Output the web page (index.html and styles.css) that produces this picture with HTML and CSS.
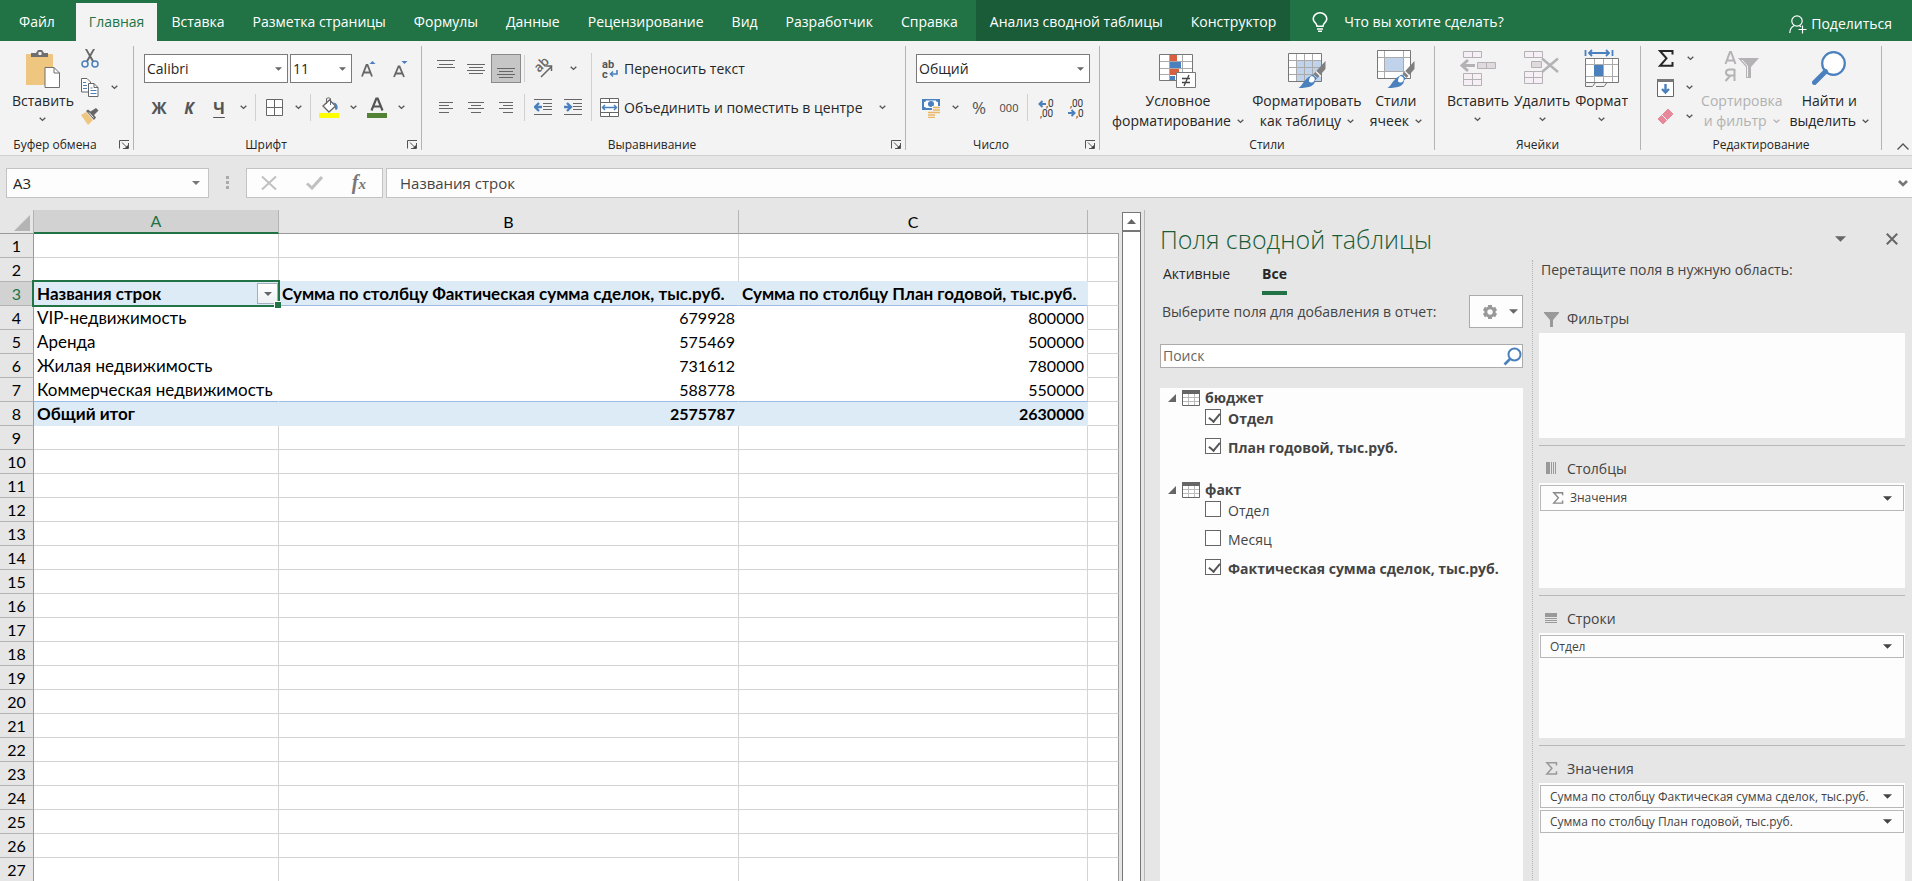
FILE: index.html
```html
<!DOCTYPE html>
<html lang="ru">
<head>
<meta charset="utf-8">
<title>Сводная таблица</title>
<link rel="stylesheet" href="styles.css">
</head>
<body>
<svg class="sprite" aria-hidden="true">
  <symbol id="chev" viewBox="0 0 7 5"><path d="M.7.8 3.5 3.4 6.3.8" fill="none" stroke="currentColor" stroke-width="1.4"/></symbol>
  <symbol id="tri" viewBox="0 0 10 5"><path d="M0 0h10L5 5z" fill="currentColor"/></symbol>
  <symbol id="launch" viewBox="0 0 10 9"><path d="M.5 8.500V.5H10M9.500 3v5.500H4M3 2.500l5.500 5.500" fill="none" stroke="#555"/><path d="M9 5v3.500H5.500z" fill="#444"/></symbol>
  <symbol id="sigma" viewBox="0 0 15 17"><path d="M14 4.500V1H1.500l6.500 7.300L1.500 15.800H14V12" fill="none" stroke="currentColor" stroke-width="2"/></symbol>
  <symbol id="brush" viewBox="0 0 28 28"><path d="M27.500 0v8l-8 9-4-4z" fill="#7f7f7f"/><path d="M18 10.500l5 5" stroke="#f3f3f3" stroke-width="1.500"/><path d="M15 13.500l4 4-2 2c0 5-5 7.500-16.500 7.500 4-3 4-5 7-8 2-2.500 4-4 7.500-5.500z" fill="#4a80bd"/><path d="M12.500 15.500c2.500-1 5 1.500 4 4-1.500 2.500-4 2.500-5.500 1 0-2 .5-3.500 1.500-5z" fill="#fff"/></symbol>
  <symbol id="grid" viewBox="0 0 18 16"><path d="M.5.5h17v15H.5z" fill="#fff" stroke="#666"/><path d="M0 0h18v4H0z" fill="#666"/><path d="M6.500 4v11M12.500 4v11M1 7.500h16M1 11.500h16" stroke="#bbb"/></symbol>
  <symbol id="find" viewBox="0 0 34 34"><circle cx="21.500" cy="12.500" r="11.300" fill="#fff" stroke="#4a80bd" stroke-width="2.200"/><path d="M13.500 20.500 2.500 31.500" stroke="#4a80bd" stroke-width="5" stroke-linecap="round"/></symbol>
</svg>

<nav class="tabs">
  <a class="tab tab-file" href="#">Файл</a>
  <a class="tab active" href="#">Главная</a>
  <a class="tab" href="#">Вставка</a>
  <a class="tab" href="#">Разметка страницы</a>
  <a class="tab" href="#">Формулы</a>
  <a class="tab" href="#">Данные</a>
  <a class="tab" href="#">Рецензирование</a>
  <a class="tab" href="#">Вид</a>
  <a class="tab" href="#">Разработчик</a>
  <a class="tab" href="#">Справка</a>
  <div class="context-tabs">
    <a class="tab" href="#">Анализ сводной таблицы</a>
    <a class="tab" href="#">Конструктор</a>
  </div>
  <button class="tell">
    <svg width="16" height="20" viewBox="0 0 16 20" fill="none" stroke="#fff" stroke-width="1.600"><path d="M5 14.200C5 11 1.200 10.500 1.200 6.800a6.800 6 0 0 1 13.600 0C14.800 10.500 11 11 11 14.200zM5 17h6M6 19.200h4"/></svg>
    <span>Что вы хотите сделать?</span>
  </button>
  <button class="share">
    <svg width="18" height="19" viewBox="0 0 18 19" fill="none" stroke="#fff" stroke-width="1.200"><circle cx="8" cy="6" r="5.200"/><path d="M.8 18c0-4 1.500-6 4.500-7.500M10.500 10.700l1.500 1M13.500 10.500v8M9.500 14.500h8"/></svg>
    <span>Поделиться</span>
  </button>
</nav>

<section class="ribbon" aria-label="Главная">
  <div class="group">
    <div class="body">
      <button class="big big-paste">
        <svg width="36" height="40" viewBox="0 0 36 40"><path d="M1 5h27v31H1z" fill="#eec680" /><path d="M6 8V4h5l2-3h4l2 3h4v4z" fill="#6f6f6f"/><path d="M13.500 3h3v3h-3z" fill="#f3f3f3"/><path d="M20 18.500h9l5.500 5.500v14.500H20z" fill="#fff" stroke="#6f6f6f"/><path d="M29 18.500V24h5.500" fill="none" stroke="#6f6f6f"/></svg>
        <span>Вставить</span><svg class="chev"><use href="#chev"/></svg>
      </button>
      <div class="stack">
        <button class="mini" aria-label="Вырезать"><svg width="18" height="19" viewBox="0 0 18 19"><path d="M4 0h2l7 12-1.500 1.500zM12 0h2L6.500 13.500 5 12z" fill="#666"/><circle cx="4" cy="15" r="3" fill="none" stroke="#4a80bd" stroke-width="1.500"/><circle cx="14" cy="15" r="3" fill="none" stroke="#4a80bd" stroke-width="1.500"/></svg></button>
        <button class="mini" aria-label="Копировать"><svg width="18" height="19" viewBox="0 0 18 19"><path d="M.5.5H6l3.500 3.500v10H.5z" fill="#fff" stroke="#666"/><path d="M2 4.500h3M2 7.500h4M2 10.500h4" stroke="#4a80bd"/><path d="M7.500 5.500H13l4 4v9H7.500z" fill="#fff" stroke="#666"/><path d="M13 5.500v4h4" fill="none" stroke="#666"/><path d="M9.500 10h2M9.500 12.500h6M9.500 15.500h6" stroke="#4a80bd"/></svg><svg class="chev"><use href="#chev"/></svg></button>
        <button class="mini" aria-label="Формат по образцу"><svg width="18" height="18" viewBox="0 0 18 18"><path d="M0 7l5-3 7 8-5 5z" fill="#eec680"/><path d="M5 3l2-1.500 2.500 2L15 0l2.500 2.500L13 7l2 2.500-2 2.500z" fill="#666"/><path d="M8 4.500l4.500 5" stroke="#f3f3f3"/></svg></button>
      </div>
    </div>
    <div class="foot"><span>Буфер обмена</span><button class="launcher" aria-label="Буфер обмена: параметры"><svg><use href="#launch"/></svg></button></div>
  </div>

  <div class="group">
    <div class="body rows">
      <div class="row row-gap">
        <div class="combo combo-font"><select aria-label="Шрифт"><option>Calibri</option></select><svg class="caret"><use href="#tri"/></svg></div>
        <div class="combo combo-size"><select aria-label="Размер шрифта"><option>11</option></select><svg class="caret"><use href="#tri"/></svg></div>
        <button class="tool" aria-label="Увеличить размер"><svg width="16" height="18" viewBox="0 0 16 18"><path d="M1 16.500 5.500 5h1L11 16.500M2.800 12.500h6.500" fill="none" stroke="#666" stroke-width="1.800"/><path d="M8.500 4h6l-3-3z" fill="#4a80bd"/></svg></button>
        <button class="tool" aria-label="Уменьшить размер"><svg width="16" height="18" viewBox="0 0 16 18"><path d="M1 17 5.500 6.500h1L11 17M2.800 13.500h6.500" fill="none" stroke="#666" stroke-width="1.800"/><path d="M8.500 1h6l-3 3z" fill="#4a80bd"/></svg></button>
      </div>
      <div class="row">
        <button class="tool letter">Ж</button><button class="tool letter italic">К</button><button class="tool letter underline">Ч</button>
        <button class="drop" aria-label="Подчеркивание"><svg class="chev"><use href="#chev"/></svg></button><i class="sep"></i>
        <button class="tool" aria-label="Границы"><svg width="17" height="17" viewBox="0 0 17 17"><path d="M.5.5h16v16H.5zM8.500 0v17M0 8.500h17" fill="#fff" stroke="#666"/></svg></button>
        <button class="drop" aria-label="Вид границы"><svg class="chev"><use href="#chev"/></svg></button><i class="sep"></i>
        <button class="tool" aria-label="Цвет заливки"><svg width="20" height="21" viewBox="0 0 20 21"><path d="M4 9l6.500-6 6 6-6.500 6z" fill="#fff" stroke="#666" stroke-width="1.300"/><path d="M7.500 7V1.500q2-1.500 4 0V8" fill="none" stroke="#666"/><path d="M14 5.500c3.500 0 5 3 4.500 6 0 1.500-2.500 2-2.500 0 0-2.500.5-4-2-6z" fill="#4a80bd"/><path d="M0 16h20v5H0z" fill="#ff0"/></svg></button>
        <button class="drop" aria-label="Выбор заливки"><svg class="chev"><use href="#chev"/></svg></button>
        <button class="tool" aria-label="Цвет шрифта"><svg width="20" height="21" viewBox="0 0 20 21"><path d="M4.500 13.500 9.300 1.500h1.400l4.800 12M6.500 9.500h7" fill="none" stroke="#555" stroke-width="2.200"/><path d="M0 16h20v5H0z" fill="#548235"/></svg></button>
        <button class="drop" aria-label="Выбор цвета шрифта"><svg class="chev"><use href="#chev"/></svg></button>
      </div>
    </div>
    <div class="foot"><span>Шрифт</span><button class="launcher" aria-label="Шрифт: параметры"><svg><use href="#launch"/></svg></button></div>
  </div>

  <div class="group">
    <div class="body align">
      <div class="rows">
        <div class="row">
          <button class="tool" aria-label="По верхнему краю"><svg width="18" height="18" viewBox="0 0 18 18"><path d="M0 .5h18M2 4.500h14M0 7.500h18" stroke="#666"/></svg></button>
          <button class="tool" aria-label="По середине"><svg width="18" height="18" viewBox="0 0 18 18"><path d="M0 4.500h18M2 7.500h14M0 10.500h18M2 13.500h14" stroke="#666"/></svg></button>
          <button class="tool pressed" aria-label="По нижнему краю"><svg width="18" height="18" viewBox="0 0 18 18"><path d="M0 8.500h18M2 11.500h14M0 14.500h18M2 17.500h14" stroke="#666"/></svg></button><i class="sep"></i>
          <button class="tool" aria-label="Ориентация"><svg class="tilt" width="20" height="20" viewBox="0 0 20 20"><text transform="translate(6 14) rotate(-45)" font-size="13">ab</text><path d="M8 18 18 8M13 7h5.500v5" fill="none" stroke="#666" stroke-width="1.500"/></svg></button>
          <button class="tool" aria-label="Выбор ориентации"><svg class="chev"><use href="#chev"/></svg></button>
        </div>
        <div class="row">
          <button class="tool" aria-label="По левому краю"><svg width="14" height="12" viewBox="0 0 14 12"><path d="M0 .5h14M0 3.500h10M0 6.500h14M0 10.500h10" stroke="#666"/></svg></button>
          <button class="tool" aria-label="По центру"><svg width="16" height="12" viewBox="0 0 16 12"><path d="M0 .5h16M3 3.500h10M0 6.500h16M3 10.500h10" stroke="#666"/></svg></button>
          <button class="tool" aria-label="По правому краю"><svg width="14" height="12" viewBox="0 0 14 12"><path d="M0 .5h14M4 3.500h10M0 6.500h14M4 10.500h10" stroke="#666"/></svg></button><i class="sep"></i>
          <button class="tool" aria-label="Уменьшить отступ"><svg width="18" height="17" viewBox="0 0 18 17"><path d="M0 .5h18M9 4.500h9M9 7.500h9M9 10.500h9M0 15.500h18" stroke="#666"/><path d="M8 8H2M5 4 1 8l4 4" fill="none" stroke="#4a80bd" stroke-width="2.400"/></svg></button>
          <button class="tool" aria-label="Увеличить отступ"><svg width="18" height="17" viewBox="0 0 18 17"><path d="M0 .5h18M9 4.500h9M9 7.500h9M9 10.500h9M0 15.500h18" stroke="#666"/><path d="M0 8h6M3 4l4 4-4 4" fill="none" stroke="#4a80bd" stroke-width="2.400"/></svg></button>
        </div>
      </div>
      <i class="sep tall"></i>
      <div class="rows">
        <button class="line"><svg class="glyphs" width="19" height="22" viewBox="0 0 19 22"><text x="2" y="10" font-size="11">ab</text><text x="2" y="20" font-size="11">c</text><path d="M17 12v4h-6M13 13.500 10.500 16l2.500 2.500" fill="none" stroke="#4a80bd" stroke-width="1.600"/></svg><span>Переносить текст</span></button>
        <button class="line"><svg width="19" height="19" viewBox="0 0 19 19"><path d="M.5.500h18v18H.5zM.5 4.500h18M.5 14.500h18M9.500.5v4M9.500 14.500v4" fill="#fff" stroke="#666"/><path d="M2.500 9.500h14M5 7 2.500 9.500 5 12M14 7l2.500 2.500L14 12" fill="none" stroke="#4a80bd" stroke-width="1.500"/></svg><span>Объединить и поместить в центре</span><svg class="chev"><use href="#chev"/></svg></button>
      </div>
    </div>
    <div class="foot"><span>Выравнивание</span><button class="launcher" aria-label="Выравнивание: параметры"><svg><use href="#launch"/></svg></button></div>
  </div>

  <div class="group">
    <div class="body rows">
      <div class="row"><div class="combo combo-number"><select aria-label="Числовой формат"><option>Общий</option></select><svg class="caret"><use href="#tri"/></svg></div></div>
      <div class="row">
        <button class="tool" aria-label="Финансовый формат"><svg width="20" height="20" viewBox="0 0 20 20"><path d="M1 1h18v11H1z" fill="#4a80bd"/><path d="M3 4q2 0 2-1.500h10Q15 4 17 4v4H12v2H5Q5 9 3 9z" fill="#fff"/><circle cx="10" cy="6" r="3" fill="#4a80bd"/><path d="M11 8h8v9h-3v3H7v-7h4z" fill="#f3f3f3"/><path d="M12 9.500h7M12 12h7M12 14.500h7M7 14.500h7M7 17h7M7 19.500h7" stroke="#eab765" stroke-width="1.700"/></svg></button>
        <button class="drop" aria-label="Выбор валюты"><svg class="chev"><use href="#chev"/></svg></button>
        <button class="tool percent">%</button><button class="tool thousand">000</button><i class="sep"></i>
        <button class="tool" aria-label="Увеличить разрядность"><svg class="glyphs thin" width="17" height="22" viewBox="0 0 17 22"><text x="8" y="10" font-size="10">,0</text><text x="2" y="20" font-size="10">,00</text><path d="M8 7H2M4.500 4 1.500 7l3 3" fill="none" stroke="#4a80bd" stroke-width="2"/></svg></button>
        <button class="tool" aria-label="Уменьшить разрядность"><svg class="glyphs thin" width="17" height="22" viewBox="0 0 17 22"><text x="2" y="10" font-size="10">,00</text><text x="8" y="20" font-size="10">,0</text><path d="M0 16h6M3.500 13l3 3-3 3" fill="none" stroke="#4a80bd" stroke-width="2"/></svg></button>
      </div>
    </div>
    <div class="foot"><span>Число</span><button class="launcher" aria-label="Число: параметры"><svg><use href="#launch"/></svg></button></div>
  </div>

  <div class="group">
    <div class="body spread">
      <button class="big">
        <svg width="38" height="40" viewBox="0 0 38 40"><path d="M.5 5.500h33v26H.5z" fill="#fff"/><path d="M1 12.500h33M1 19.500h33M1 25.500h33M10.500 5v26M23.500 5v26" stroke="#aaa"/><path d="M11 6h7v6h-7zM11 20h9v6h-9z" fill="#d85f40"/><path d="M11 13h11v6H11zM11 27h5v5h-5z" fill="#4a80bd"/><path d="M.5 5.500h33v26H.5z" fill="none" stroke="#777"/><path d="M17.500 23.500h19v15h-19z" fill="#fff" stroke="#777" /><path d="M23 29.500h8M23 33.500h8M30 26l-5 11" stroke="#444" stroke-width="1.300"/></svg>
        <span>Условное</span><span>форматирование <svg class="chev"><use href="#chev"/></svg></span>
      </button>
      <button class="big">
        <svg width="38" height="40" viewBox="0 0 38 40"><path d="M.5 4.500h33v28H.5z" fill="#fff"/><path d="M9 12h24v20H9z" fill="#c0d3ea"/><path d="M1 11.500h33M1 18.500h33M1 25.500h33M8.500 5v27M16.500 5v27M24.500 5v27" stroke="#aaa"/><path d="M.5 4.500h33v28H.5z" fill="none" stroke="#777"/><use href="#brush" x="10" y="12" width="28" height="28"/></svg>
        <span>Форматировать</span><span>как таблицу <svg class="chev"><use href="#chev"/></svg></span>
      </button>
      <button class="big">
        <svg width="38" height="40" viewBox="0 0 38 40"><path d="M.5 1.500h33v28H.5z" fill="#fff"/><path d="M8 9h18v13H8z" fill="#c0d3ea"/><path d="M1 8.500h33M1 22.500h33M7.500 2v27M26.500 2v27" stroke="#aaa"/><path d="M.5 1.500h33v28H.5z" fill="none" stroke="#777"/><use href="#brush" x="10" y="12" width="28" height="28"/></svg>
        <span>Стили</span><span>ячеек <svg class="chev"><use href="#chev"/></svg></span>
      </button>
    </div>
    <div class="foot foot-plain"><span>Стили</span></div>
  </div>

  <div class="group">
    <div class="body spread">
      <button class="big">
        <svg width="36" height="40" viewBox="0 0 36 40" fill="#f6f0f6" stroke="#b5b2b5"><path d="M3.500 2.500h18v6h-18zM12.500 2.500v6M3.500 24.500h18v12h-18zM3.500 30.500h18M12.500 24.500v12"/><path d="M17.500 13.500h18v6h-18zM26.500 13.500v6" fill="#e0dade"/><path d="M15 16.500H3M8 11l-6 5.500L8 22" fill="none" stroke-width="3"/></svg>
        <span>Вставить</span><svg class="chev"><use href="#chev"/></svg>
      </button>
      <button class="big">
        <svg width="36" height="40" viewBox="0 0 36 40" fill="#f6f0f6" stroke="#b5b2b5"><path d="M.5 2.500h18v6H.5zM9.500 2.500v6M.5 22.500h18v12H.5zM.5 28.500h18M9.500 22.500v12"/><path d="M7.500 12.500h10v6h-10z" fill="#e0dade"/><path d="M18 9.500 34 23M34 9.500 18 23" fill="none" stroke-width="2.500"/></svg>
        <span>Удалить</span><svg class="chev"><use href="#chev"/></svg>
      </button>
      <button class="big">
        <svg width="36" height="40" viewBox="0 0 36 40"><path d="M1.500 1v6M28.500 1v6M5 4h20M8 1 5 4l3 3M22 1l3 3-3 3" fill="none" stroke="#4a80bd" stroke-width="1.800"/><path d="M1.500 9.500h33v24h-33z" fill="#fff"/><path d="M2 15.500h32M2 27.500h32M10.500 10v23M19.500 10v23M28.500 10v23" stroke="#aaa"/><path d="M10 16h9v11h-9z" fill="#4a80bd"/><path d="M1.500 9.500h33v24h-33zM1.500 34v3.500h7l3-4M12 37.500h8l3-4" fill="none" stroke="#777"/></svg>
        <span>Формат</span><svg class="chev"><use href="#chev"/></svg>
      </button>
    </div>
    <div class="foot foot-plain"><span>Ячейки</span></div>
  </div>

  <div class="group">
    <div class="body spread">
      <div class="stack edit">
        <button class="mini" aria-label="Сумма"><svg width="18" height="17"><use href="#sigma"/></svg><svg class="chev"><use href="#chev"/></svg></button>
        <button class="mini" aria-label="Заполнить"><svg width="17" height="18" viewBox="0 0 17 18"><path d="M.5.500h16v17H.5z" fill="#fff" stroke="#666"/><path d="M0 0h17v3H0z" fill="#777"/><path d="M8.500 5v8M5 10l3.500 3.500L12 10" fill="none" stroke="#4a80bd" stroke-width="2.400"/></svg><svg class="chev"><use href="#chev"/></svg></button>
        <button class="mini" aria-label="Очистить"><svg width="17" height="17" viewBox="0 0 17 17"><path d="M11 1l5 5-5.500 5.500-5-5zM4.500 7.500l5 5-3.500 3.500L1 11z" fill="#e8889b" stroke="#e8889b" stroke-linejoin="round"/></svg><svg class="chev"><use href="#chev"/></svg></button>
      </div>
      <button class="big" disabled>
        <svg width="36" height="40" viewBox="0 0 36 40"><path d="M1.500 15 6 3h1l4.500 12M3 11.500h7M10.500 20v12M10.500 20.500H5.500q-3.500 0-3.500 3t3.500 3h5M6.500 26.500 1.500 32" fill="none" stroke="#b5b2b5" stroke-width="2"/><path d="M14 9h21l-8 9v11h-5V18z" fill="#b5b2b5"/><path d="M18 11l5.500 6v11" fill="none" stroke="#f3f3f3"/></svg>
        <span>Сортировка</span><span>и фильтр <svg class="chev"><use href="#chev"/></svg></span>
      </button>
      <button class="big">
        <svg width="34" height="40" viewBox="0 -2 34 40"><use href="#find" width="34" height="34"/></svg>
        <span>Найти и</span><span>выделить <svg class="chev"><use href="#chev"/></svg></span>
      </button>
    </div>
    <div class="foot foot-plain"><span>Редактирование</span></div>
  </div>
  <button class="collapse" aria-label="Свернуть ленту"><svg width="12" height="7" viewBox="0 0 12 7"><path d="M.5 6.500 6 1l5.500 5.500" fill="none" stroke="#555" stroke-width="1.400"/></svg></button>
</section>

<section class="formula-bar" aria-label="Строка формул">
  <div class="namebox"><input type="text" value="A3" aria-label="Имя ячейки"><svg class="caret"><use href="#tri"/></svg></div>
  <svg class="grip" width="3" height="14" viewBox="0 0 3 14"><path d="M0 0h3v3H0zM0 5h3v3H0zM0 10h3v3H0z" fill="#aaa"/></svg>
  <div class="fx">
    <button aria-label="Отмена"><svg width="16" height="14" viewBox="0 0 16 14"><path d="M1 .5 15 13.500M15 .5 1 13.500" stroke="#c0c0c0" stroke-width="2"/></svg></button>
    <button aria-label="Ввод"><svg width="17" height="14" viewBox="0 0 17 14"><path d="M1 7.500 6 12 16 1" fill="none" stroke="#c0c0c0" stroke-width="3"/></svg></button>
    <button class="fx-button" aria-label="Вставить функцию"><i>f<small>x</small></i></button>
  </div>
  <div class="formula"><input type="text" value="Названия строк" aria-label="Формула"><svg width="10" height="7" viewBox="0 0 10 7"><path d="M1 1l4 4 4-4" fill="none" stroke="#777" stroke-width="2.600"/></svg></div>
</section>

<main class="work">
  <div class="sheet">
    <table>
      <colgroup><col class="c-num"><col class="c-a"><col class="c-b"><col class="c-c"><col></colgroup>
      <thead><tr><th class="corner"><svg width="16" height="16" viewBox="0 0 16 16"><path d="M16 0v16H0z" fill="#b4b4b4"/></svg></th><th class="sel">A</th><th>B</th><th>C</th><th></th></tr></thead>
      <tbody>
        <tr><th>1</th><td></td><td></td><td></td><td></td></tr>
        <tr class="before"><th>2</th><td></td><td></td><td></td><td></td></tr>
        <tr class="head"><th class="sel">3</th><td class="cursor">Названия строк<button class="filter" aria-label="Фильтр строк"><svg width="8" height="4"><use href="#tri"/></svg></button><i class="frame"></i></td><td>Сумма по столбцу Фактическая сумма сделок, тыс.руб.</td><td>Сумма по столбцу План годовой, тыс.руб.</td><td></td></tr>
        <tr class="data"><th>4</th><td>VIP-недвижимость</td><td>679928</td><td>800000</td><td></td></tr>
        <tr class="data"><th>5</th><td>Аренда</td><td>575469</td><td>500000</td><td></td></tr>
        <tr class="data"><th>6</th><td>Жилая недвижимость</td><td>731612</td><td>780000</td><td></td></tr>
        <tr class="data last"><th>7</th><td>Коммерческая недвижимость</td><td>588778</td><td>550000</td><td></td></tr>
        <tr class="data total"><th>8</th><td>Общий итог</td><td>2575787</td><td>2630000</td><td></td></tr>
        <tr><th>9</th><td></td><td></td><td></td><td></td></tr>
        <tr><th>10</th><td></td><td></td><td></td><td></td></tr>
        <tr><th>11</th><td></td><td></td><td></td><td></td></tr>
        <tr><th>12</th><td></td><td></td><td></td><td></td></tr>
        <tr><th>13</th><td></td><td></td><td></td><td></td></tr>
        <tr><th>14</th><td></td><td></td><td></td><td></td></tr>
        <tr><th>15</th><td></td><td></td><td></td><td></td></tr>
        <tr><th>16</th><td></td><td></td><td></td><td></td></tr>
        <tr><th>17</th><td></td><td></td><td></td><td></td></tr>
        <tr><th>18</th><td></td><td></td><td></td><td></td></tr>
        <tr><th>19</th><td></td><td></td><td></td><td></td></tr>
        <tr><th>20</th><td></td><td></td><td></td><td></td></tr>
        <tr><th>21</th><td></td><td></td><td></td><td></td></tr>
        <tr><th>22</th><td></td><td></td><td></td><td></td></tr>
        <tr><th>23</th><td></td><td></td><td></td><td></td></tr>
        <tr><th>24</th><td></td><td></td><td></td><td></td></tr>
        <tr><th>25</th><td></td><td></td><td></td><td></td></tr>
        <tr><th>26</th><td></td><td></td><td></td><td></td></tr>
        <tr><th>27</th><td></td><td></td><td></td><td></td></tr>
      </tbody>
    </table>
  </div>
  <div class="scroll"><button aria-label="Прокрутить вверх"><svg width="9" height="5" viewBox="0 0 9 5"><path d="M0 5h9L4.500 0z" fill="#666"/></svg></button><div class="thumb"></div></div>

  <aside class="pane">
    <header class="pane-head">
      <h1>Поля сводной таблицы</h1>
      <button aria-label="Параметры области"><svg width="11" height="6"><use href="#tri"/></svg></button>
      <button aria-label="Закрыть"><svg width="12" height="12" viewBox="0 0 12 12"><path d="M.8.8l10.400 10.400M11.200.8.8 11.200" stroke="#666" stroke-width="2"/></svg></button>
    </header>
    <div class="pane-body">
      <div class="fields">
        <nav class="views"><a href="#">Активные</a><a class="on" href="#">Все</a></nav>
        <div class="prompt">
          <span>Выберите поля для добавления в отчет:</span>
          <button class="gear" aria-label="Сервис"><svg width="16" height="16" viewBox="0 0 16 16"><path d="M8 1v14M1.900 4.500l12.200 7M1.900 11.500l12.200-7" stroke="#999" stroke-width="4"/><circle cx="8" cy="8" r="4.200" fill="#fdfdfd" stroke="#999" stroke-width="3"/></svg><svg width="9" height="5"><use href="#tri"/></svg></button>
        </div>
        <div class="search"><input type="text" placeholder="Поиск" aria-label="Поиск"><svg width="19" height="19" viewBox="0 0 19 19"><circle cx="11.500" cy="7.500" r="6" fill="none" stroke="#4a80bd" stroke-width="2"/><path d="M7 12 1.500 17.500" stroke="#4a80bd" stroke-width="2.600"/></svg></div>
        <div class="list">
          <section>
            <h2><svg class="open" width="8" height="8" viewBox="0 0 8 8"><path d="M8 0v8H0z" fill="#666"/></svg><svg width="18" height="16"><use href="#grid"/></svg>бюджет</h2>
            <label class="checked"><input type="checkbox" checked>Отдел</label>
            <label class="checked"><input type="checkbox" checked>План годовой, тыс.руб.</label>
          </section>
          <section>
            <h2><svg class="open" width="8" height="8" viewBox="0 0 8 8"><path d="M8 0v8H0z" fill="#666"/></svg><svg width="18" height="16"><use href="#grid"/></svg>факт</h2>
            <label><input type="checkbox">Отдел</label>
            <label><input type="checkbox">Месяц</label>
            <label class="checked"><input type="checkbox" checked>Фактическая сумма сделок, тыс.руб.</label>
          </section>
        </div>
      </div>
      <div class="areas">
        <p>Перетащите поля в нужную область:</p>
        <section>
          <h2><svg width="15" height="15" viewBox="0 0 15 15"><path d="M0 0h15v1L9 8v7H6V8L0 1z" fill="#999"/></svg>Фильтры</h2>
          <div class="zone"></div>
        </section>
        <section>
          <h2><svg width="15" height="15" viewBox="0 0 15 15"><path d="M2 1h4v12H2zM7 1h1v12H7zM9 1h1v12H9zM11 1h1v12h-1z" fill="#999"/></svg>Столбцы</h2>
          <div class="zone"><button class="pill pill-tall"><svg class="sum" width="12" height="12"><use href="#sigma"/></svg><span>Значения</span><svg width="9" height="5"><use href="#tri"/></svg></button></div>
        </section>
        <section>
          <h2><svg width="15" height="15" viewBox="0 0 15 15"><path d="M1 2h12v4H1zM1 7h12v1H1zM1 9h12v1H1zM1 11h12v1H1z" fill="#999"/></svg>Строки</h2>
          <div class="zone"><button class="pill"><span>Отдел</span><svg width="9" height="5"><use href="#tri"/></svg></button></div>
        </section>
        <section>
          <h2><svg width="15" height="13"><use href="#sigma"/></svg>Значения</h2>
          <div class="zone">
            <button class="pill"><span>Сумма по столбцу Фактическая сумма сделок, тыс.руб.</span><svg width="9" height="5"><use href="#tri"/></svg></button>
            <button class="pill"><span>Сумма по столбцу План годовой, тыс.руб.</span><svg width="9" height="5"><use href="#tri"/></svg></button>
          </div>
        </section>
      </div>
    </div>
  </aside>
</main>
</body>
</html>
```
FILE: styles.css
```css
* { box-sizing: border-box; }

body {
  margin: 0;
  height: 100vh;
  display: flex;
  flex-direction: column;
  overflow: hidden;
  background: #e6e6e6;
  color: #262626;
  font: 14px/20px "Open Sans", "Noto Sans", sans-serif;
}

button, input, select { font: inherit; color: inherit; }
button { border: 0; padding: 0; background: none; white-space: nowrap; }
button, a { cursor: pointer; }
a { color: inherit; text-decoration: none; }
svg { display: block; flex: none; }
h1, h2, p { margin: 0; font-weight: 400; }
.sprite { position: absolute; width: 0; height: 0; }
.chev { width: 7px; height: 5px; color: #555; }

/* Tabs */
.tabs { display: flex; flex: none; height: 41px; padding-top: 3px; background: #217346; color: #fff; white-space: nowrap; }
.tab { display: flex; align-items: center; padding: 0 14px; }
.tab-file { padding: 0 21px 0 19px; }
.tab.active { background: #f3f3f3; color: #217346; padding: 0 13px; }
.context-tabs { display: flex; margin: -3px 0 0 4px; padding-top: 3px; background: #1b5c38; }
.tell, .share { display: flex; align-items: center; }
.tell { gap: 16px; margin-left: 22px; }
.share { gap: 4px; margin-left: auto; margin-right: 20px; padding-top: 4px; }

/* Ribbon */
.ribbon {
  flex: none;
  display: grid;
  grid-template-columns: 134px 288px 484px 194px 335px 206px 241px 1fr;
  height: 115px;
  padding: 5px 0;
  background: #f3f3f3;
  border-bottom: 1px solid #d0d0d0;
}
.group { display: flex; flex-direction: column; border-right: 1px solid #b4b4b4; }
.body { flex: 1; display: flex; }
.foot { position: relative; display: flex; justify-content: center; padding: 0 32px 0 9px; font-size: 12px; line-height: 10px; }
.foot-plain { padding: 0 9px; }
.foot span { flex: 1; text-align: center; white-space: nowrap; }
.launcher { position: absolute; right: 4px; top: 0; }
.launcher svg { width: 10px; height: 9px; }
.rows { display: flex; flex-direction: column; padding-top: 8px; gap: 10px; }
.body.rows { padding-left: 10px; }
.row { display: flex; align-items: center; height: 29px; }
.row-gap { gap: 2px; }
.tool { display: flex; align-items: center; justify-content: center; width: 30px; height: 29px; }
.drop { display: flex; justify-content: center; width: 18px; }
.pressed { background: #c6c6c6; border: 1px solid #8a8a8a; }
.letter { font-size: 16px; font-weight: 700; color: #555; }
.italic { font-style: italic; }
.underline { text-decoration: underline; text-underline-offset: 3px; text-decoration-thickness: 1px; }
.percent { font-size: 17px; color: #555; }
.thousand { font-size: 11px; color: #444; }
.glyphs { font-family: Roboto, sans-serif; font-weight: 700; fill: #555; }
.glyphs.thin { font-weight: 400; fill: #333; }
.tilt { font-family: "Open Sans", sans-serif; font-weight: 600; fill: #666; overflow: visible; }
.sep { flex: none; width: 1px; height: 27px; margin: 0 3px; background: #d0d0d0; }
.sep.tall { height: 68px; margin: 7px 3px 0; }
.align { padding-left: 9px; }
.line { display: flex; align-items: center; gap: 5px; height: 29px; padding-left: 5px; }
.line .chev { margin-left: 11px; }

.combo { position: relative; height: 29px; background: #fff; border: 1px solid #7a7a7a; }
.combo select { width: 100%; height: 100%; padding: 0 2px; border: 0; background: none; appearance: none; }
.combo .caret { position: absolute; right: 5px; top: 12px; width: 7px; height: 4px; color: #666; }
.combo-font { width: 144px; }
.combo-size { width: 62px; }
.combo-number { width: 174px; }

.big { display: flex; flex-direction: column; align-items: center; }
.big > svg:first-child { margin: 3px 0 2px; }
.big > span { display: flex; align-items: center; gap: 6px; }
.big > .chev { margin-top: 6px; }
.big:disabled, .big:disabled .chev { color: #b1b1b1; }
.big-paste { padding-left: 12px; }
.stack { display: flex; flex-direction: column; padding: 3px 0 0 7px; gap: 10px; }
.mini { display: flex; align-items: center; gap: 12px; height: 19px; }
.spread { justify-content: space-between; padding: 0 12px; }
.edit { padding-left: 4px; }
.collapse { align-self: end; justify-self: end; margin: 0 3px 0 0; }

/* Formula bar */
.formula-bar { flex: none; display: flex; align-items: center; height: 54px; padding: 0 0 0 6px; color: #444; }
.namebox, .fx, .formula { display: flex; align-items: center; height: 30px; background: #fdfdfd; border: 1px solid #c3c3c3; }
.namebox { width: 203px; color: #222; }
.namebox .caret { width: 8px; height: 4px; margin-right: 8px; color: #777; }
.formula-bar input { flex: 1; min-width: 0; border: 0; padding: 0 6px; background: none; outline: 0; font-size: 15px; }
.grip { margin: 0 17px; }
.fx { width: 137px; justify-content: space-between; padding: 0 16px 0 14px; }
.fx-button { font: 700 20px/22px "Liberation Serif", serif; color: #777; }
.fx-button small { font-size: 15px; }
.formula { flex: 1; margin-left: 3px; padding: 0 4px 0 7px; border-right: 0; }

/* Sheet */
.work { flex: 1; display: flex; min-height: 0; }
.sheet { flex: 1; min-width: 0; overflow: hidden; color: #000; font: 16px/22px Lato, sans-serif; }
.sheet table { width: 100%; table-layout: fixed; border-collapse: separate; border-spacing: 0; }
.c-num { width: 34px; }
.c-a { width: 245px; }
.c-b { width: 460px; }
.c-c { width: 349px; }
.sheet td, .sheet th { height: 24px; padding: 0; white-space: nowrap; }
.sheet thead th { border-right: 1px solid #b4b4b4; border-bottom: 1px solid #999; font-weight: 400; }
.sheet thead th:last-child { border-right: 0; }
.sheet thead .sel { background: #d2d2d2; color: #217346; border-bottom: 2px solid #217346; }
.sheet .corner svg { margin: 2px 0 0 14px; }
.sheet tbody th { border-right: 1px solid #999; border-bottom: 1px solid #b4b4b4; font-weight: 400; }
.sheet tbody .sel { background: #d2d2d2; color: #217346; }
.sheet td { padding: 0 3px; background: #fff; border-right: 1px solid #d4d4d4; border-bottom: 1px solid #d4d4d4; text-align: right; }
.sheet td:nth-child(2), .sheet .head td { text-align: left; font-size: 17px; }
.sheet td:last-child { border-right-color: #999; }
.before td:nth-child(-n+4) { border-bottom-color: #ddebf7; }
.head td:nth-child(-n+4), .total td:nth-child(-n+4) { background: #ddebf7; border-color: #ddebf7; font-weight: 700; }
.sheet .head td:nth-child(-n+4) { border-bottom-color: #9dbbe3; }
.data:not(.total) td:nth-child(-n+3) { border-color: #fff; }
.data:not(.total) td:nth-child(4) { border-bottom-color: #fff; }
.sheet .last td:nth-child(-n+4) { border-bottom-color: #9dbbe3; }
.cursor { position: relative; }
.frame { position: absolute; inset: -2px -2px -2px -2px; border: 2px solid #217346; pointer-events: none; }
.frame::after { content: ""; position: absolute; right: -3px; bottom: -3px; width: 6px; height: 6px; background: #217346; border: solid #fff; border-width: 1px 0 0 1px; }
.filter { position: absolute; right: 0; top: 1px; width: 21px; height: 21px; display: flex; align-items: center; justify-content: center; background: linear-gradient(#fff, #eef0f4); border: 1px solid #a6b0bd; color: #666; }

.scroll { flex: none; display: flex; flex-direction: column; width: 26px; padding: 2px 3px 0; border-right: 1px solid #b8b8b8; }
.scroll button { display: flex; align-items: center; justify-content: center; height: 19px; border: 1px solid #777; background: #fff; }
.thumb { flex: 1; border: 1px solid #777; border-bottom: 0; background: #fff; }

/* Pivot pane */
.pane { flex: none; width: 767px; display: flex; flex-direction: column; color: #444; }
.pane-head { display: flex; align-items: center; height: 50px; padding: 8px 14px 0 15px; gap: 40px; color: #666; }
.pane-head h1 { flex: 1; font-size: 25px; line-height: 36px; font-weight: 300; color: #185c37; }
.pane-body { flex: 1; display: grid; grid-template-columns: minmax(0, 388fr) minmax(0, 379fr); min-height: 0; }
.fields { display: flex; flex-direction: column; padding: 0 9px 0 15px; border-right: 1px dotted #b4b4b4; }
.views { display: flex; gap: 32px; padding: 4px 3px 0; color: #262626; }
.views a { padding-bottom: 7px; border-bottom: 4px solid transparent; }
.views .on { font-weight: 700; border-color: #217346; }
.prompt { display: flex; justify-content: space-between; align-items: center; padding-left: 2px; height: 33px; }
.gear { display: flex; align-items: center; justify-content: space-between; width: 54px; height: 33px; padding: 0 4px 0 12px; border: 1px solid #ababab; background: #fdfdfd; color: #666; }
.search { display: flex; align-items: center; height: 24px; margin: 16px 0 20px; border: 1px solid #ababab; background: #fff; }
.search input { flex: 1; border: 0; padding: 0 2px; outline: 0; background: none; }
.search input::placeholder { color: #666; }
.list { flex: 1; background: #fdfdfd; padding: 0 8px; }
.list section { margin-bottom: 14px; }
.list h2 { display: flex; align-items: center; gap: 5px; height: 20px; font-size: 14px; line-height: 20px; font-weight: 700; }
.list .open { margin-right: 1px; }
.list label { display: flex; gap: 7px; height: 29px; padding: 1px 0 0 37px; }
.list input { flex: none; appearance: none; width: 16px; height: 16px; margin: 0; border: 1px solid #666; background: #fff; }
.list input:checked::before { content: ""; display: block; width: 5px; height: 9px; margin: 1px 0 0 5px; border: solid #555; border-width: 0 2px 2px 0; transform: rotate(40deg); }
.list .checked { font-weight: 700; }

.areas { display: flex; flex-direction: column; padding: 0 7px 0 6px; }
.areas p { padding: 0 2px 25px; }
.areas section { display: flex; flex-direction: column; border-bottom: 1px solid #b8b8b8; padding-bottom: 7px; }
.areas section:last-child { flex: 1; border: 0; padding: 0; }
.areas h2 { display: flex; align-items: center; gap: 8px; height: 37px; padding: 8px 5px 0; font-size: 14px; }
.areas h2 svg { color: #999; }
.areas p + section h2 { height: 28px; padding-top: 0; }
.zone { flex: 1; display: flex; flex-direction: column; gap: 2px; min-height: 105px; padding: 2px 1px; background: #fdfdfd; }
.pill { display: flex; align-items: center; height: 23px; padding: 0 11px 0 9px; border: 1px solid #b8b8b8; font-size: 12px; }
.pill-tall { height: 26px; }
.pill span { flex: 1; text-align: left; }
.sum { margin: 0 6px 0 2px; color: #888; }
```
